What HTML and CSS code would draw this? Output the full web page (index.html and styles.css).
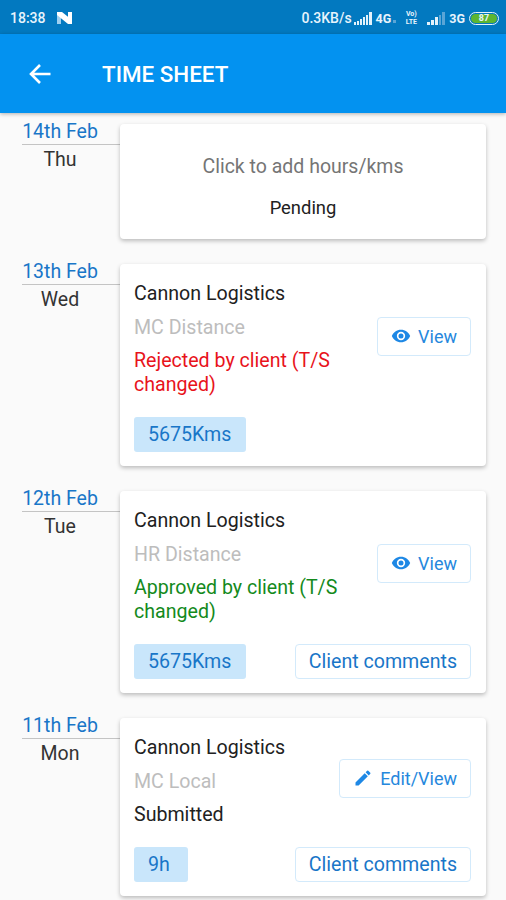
FILE: index.html
```html
<!DOCTYPE html>
<html lang="en">
<head>
  <meta charset="UTF-8">
  <meta name="viewport" content="width=device-width, initial-scale=1.0">
  <title>Time Sheet</title>
  <link rel="stylesheet" href="styles.css">
</head>
<body>
  <div class="status-bar">
    <div class="status-left">
      <span class="clock">18:38</span>
      <svg class="n-icon" width="15" height="12" viewBox="0 0 15 12">
        <path d="M0 0h4v12H0z" fill="#9fd0f0"/>
        <path d="M11 0h4v12h-4z" fill="#ffffff"/>
        <path d="M0 0h5l10 8v4h-4L0 3z" fill="#ffffff"/>
      </svg>
    </div>
    <div class="status-right">
      <span class="speed">0.3KB/s</span>
      <svg class="signal" width="19" height="13" viewBox="0 0 19 13">
        <path d="M0 10h2v3H0zM3 9h2v4H3zM6 7h2v6H6zM9 5h2v8H9zM12 3h2v10h-2zM15 0h3v13h-3z" fill="#e3f2fb"/>
      </svg>
      <span class="net">4G</span>
      <span class="net-dot"></span>
      <span class="volte">Vo)<br>LTE</span>
      <svg class="signal signal-second" width="19" height="13" viewBox="0 0 19 13">
        <path d="M0 10h3v3H0zM4 8h3v5H4zM8 5h3v8H8z" fill="#e3f2fb"/>
        <path d="M12 3h2v10h-2zM15 0h3v13h-3z" fill="#5aa5d6"/>
      </svg>
      <span class="net">3G</span>
      <span class="battery"><span class="battery-level">87</span></span>
    </div>
  </div>

  <header class="app-bar">
    <svg class="back" width="22" height="22" viewBox="0 0 22 22">
      <path d="M21.5 11H2.5M11 2 2 11l9 9" fill="none" stroke="#fff" stroke-width="2.6"/>
    </svg>
    <h1>TIME SHEET</h1>
  </header>

  <main class="sheet">
    <section class="day">
      <div class="date">
        <div class="date-num">14th Feb</div>
        <div class="date-name">Thu</div>
      </div>
      <div class="card card-empty">
        <div class="add-hint">Click to add hours/kms</div>
        <div class="pending">Pending</div>
      </div>
    </section>

    <section class="day">
      <div class="date">
        <div class="date-num">13th Feb</div>
        <div class="date-name">Wed</div>
      </div>
      <div class="card">
        <div class="card-top">
          <div class="card-text">
            <div class="client">Cannon Logistics</div>
            <div class="job">MC Distance</div>
            <div class="state rejected">Rejected by client (T/S changed)</div>
          </div>
          <button class="btn btn-icon">
            <svg width="20" height="20" viewBox="0 0 24 24"><path d="M12 4.5C7 4.5 2.7 7.6 1 12c1.700 4.400 6 7.500 11 7.500s9.300-3.100 11-7.500c-1.700-4.400-6-7.500-11-7.500zM12 17a5 5 0 1 1 0-10 5 5 0 0 1 0 10zm0-8a3 3 0 1 0 0 6 3 3 0 0 0 0-6z" fill="#1e88e5"/></svg>
            View
          </button>
        </div>
        <div class="card-foot">
          <span class="pill">5675Kms</span>
        </div>
      </div>
    </section>

    <section class="day">
      <div class="date">
        <div class="date-num">12th Feb</div>
        <div class="date-name">Tue</div>
      </div>
      <div class="card">
        <div class="card-top">
          <div class="card-text">
            <div class="client">Cannon Logistics</div>
            <div class="job">HR Distance</div>
            <div class="state approved">Approved by client (T/S changed)</div>
          </div>
          <button class="btn btn-icon">
            <svg width="20" height="20" viewBox="0 0 24 24"><path d="M12 4.5C7 4.5 2.7 7.6 1 12c1.700 4.400 6 7.500 11 7.500s9.300-3.100 11-7.500c-1.700-4.400-6-7.500-11-7.500zM12 17a5 5 0 1 1 0-10 5 5 0 0 1 0 10zm0-8a3 3 0 1 0 0 6 3 3 0 0 0 0-6z" fill="#1e88e5"/></svg>
            View
          </button>
        </div>
        <div class="card-foot">
          <span class="pill">5675Kms</span>
          <button class="btn">Client comments</button>
        </div>
      </div>
    </section>

    <section class="day">
      <div class="date">
        <div class="date-num">11th Feb</div>
        <div class="date-name">Mon</div>
      </div>
      <div class="card">
        <div class="card-top">
          <div class="card-text">
            <div class="client">Cannon Logistics</div>
            <div class="job">MC Local</div>
            <div class="state">Submitted</div>
          </div>
          <button class="btn btn-icon btn-edit">
            <svg width="20" height="20" viewBox="0 0 24 24"><path d="M3 17.250V21h3.750L17.810 9.940l-3.750-3.750L3 17.250zM20.710 7.040a1 1 0 0 0 0-1.410l-2.340-2.340a1 1 0 0 0-1.410 0l-1.830 1.830 3.750 3.750 1.830-1.830z" fill="#1e88e5"/></svg>
            Edit/View
          </button>
        </div>
        <div class="card-foot">
          <span class="pill pill-short">9h</span>
          <button class="btn">Client comments</button>
        </div>
      </div>
    </section>
  </main>
</body>
</html>
```

FILE: styles.css
```css
html, body {
  height: 100%;
  overflow: hidden;
}

body {
  margin: 0;
  font-family: Roboto, "Liberation Sans", sans-serif;
  background-color: #fafafa;
  color: #212121;
}

/* status bar */
.status-bar {
  display: flex;
  justify-content: space-between;
  align-items: center;
  height: 34px;
  padding: 2px 7px 0 10px;
  box-sizing: border-box;
  background-color: #0279c0;
  color: #e8f4fc;
  font-weight: 700;
  font-size: 12.5px;
}
.status-left {
  display: flex;
  align-items: center;
  gap: 11px;
}
.clock {
  font-size: 14px;
  font-weight: 500;
}
.status-right {
  display: flex;
  align-items: center;
}
.speed {
  margin-right: 2px;
  font-size: 14px;
  font-weight: 500;
}
.net {
  margin-left: 3px;
}
.net-dot {
  width: 3px;
  height: 3px;
  margin: 6px 7px 0 2px;
  background-color: #5aa5d6;
}
.volte {
  font-size: 7px;
  line-height: 8px;
  text-align: center;
  width: 16px;
}
.signal-second {
  margin-left: 8px;
}
.battery {
  display: flex;
  align-items: center;
  width: 30px;
  height: 13px;
  margin-left: 4px;
  padding: 1px;
  box-sizing: border-box;
  border: 1px solid #e3f2fb;
  border-radius: 7px;
}
.battery-level {
  flex: 1;
  height: 100%;
  border-radius: 5px;
  background-color: #5cb531;
  color: #e8f4fc;
  font-size: 9px;
  line-height: 9px;
  text-align: center;
}

/* app bar */
.app-bar {
  position: relative;
  display: flex;
  align-items: center;
  height: 79px;
  padding-left: 29px;
  background-color: #0392f0;
  box-shadow: 0 1px 4px rgba(0, 0, 0, 0.3);
}
.back {
  margin-right: 51px;
}
.app-bar h1 {
  margin: 0;
  font-size: 22.4px;
  font-weight: 500;
  color: #fff;
}

/* day rows */
.sheet {
  padding: 11px 20px 0 22px;
}
.day {
  display: flex;
  margin-bottom: 25px;
}
.date {
  width: 98px;
  flex: none;
  text-align: center;
  font-size: 19.5px;
}
.date-num {
  height: 20px;
  padding-right: 22px;
  line-height: 15px;
  border-bottom: 1px solid #c4c4c4;
  color: #1976c8;
}
.date-name {
  padding-right: 22px;
  margin-top: 4px;
  line-height: 22px;
  color: #333;
}

/* cards */
.card {
  flex: 1;
  min-width: 0;
  padding: 18px 15px 14px 14px;
  background-color: #fff;
  border-radius: 4px;
  box-shadow: 0 2px 4px rgba(0, 0, 0, 0.25);
}
.card-empty {
  height: 115px;
  padding: 0;
  box-sizing: border-box;
  text-align: center;
}
.add-hint {
  margin-top: 31px;
  line-height: 24px;
  font-size: 19.5px;
  color: #757575;
}
.pending {
  margin-top: 17px;
  line-height: 24px;
  font-size: 18.4px;
}
.card-top {
  display: flex;
  align-items: center;
}
.card-text {
  flex: 1;
  min-width: 0;
  font-size: 19.6px;
  line-height: 24px;
}
.job {
  margin-top: 10px;
  color: #bdbdbd;
}
.state {
  margin-top: 9px;
}
.rejected {
  color: #e8131b;
}
.approved {
  color: #148a1c;
}
.card-foot {
  display: flex;
  justify-content: space-between;
  align-items: center;
  margin-top: 20px;
}
.pill {
  height: 35px;
  padding: 0 15px 0 14px;
  line-height: 35px;
  border-radius: 3px;
  background-color: #c9e6fb;
  color: #1976c8;
  font-size: 19.6px;
}
.pill-short {
  padding-right: 18px;
}
.btn {
  height: 35px;
  padding: 0 13px;
  background-color: #fff;
  border: 1px solid #d3eafb;
  border-radius: 4px;
  color: #1976c8;
  font-family: inherit;
  font-size: 19.6px;
}
.btn-icon {
  display: flex;
  align-items: center;
  gap: 7px;
  flex: none;
  height: 39px;
  margin-left: 10px;
  margin-top: -7px;
  color: #2688dd;
  font-size: 18px;
}
```
